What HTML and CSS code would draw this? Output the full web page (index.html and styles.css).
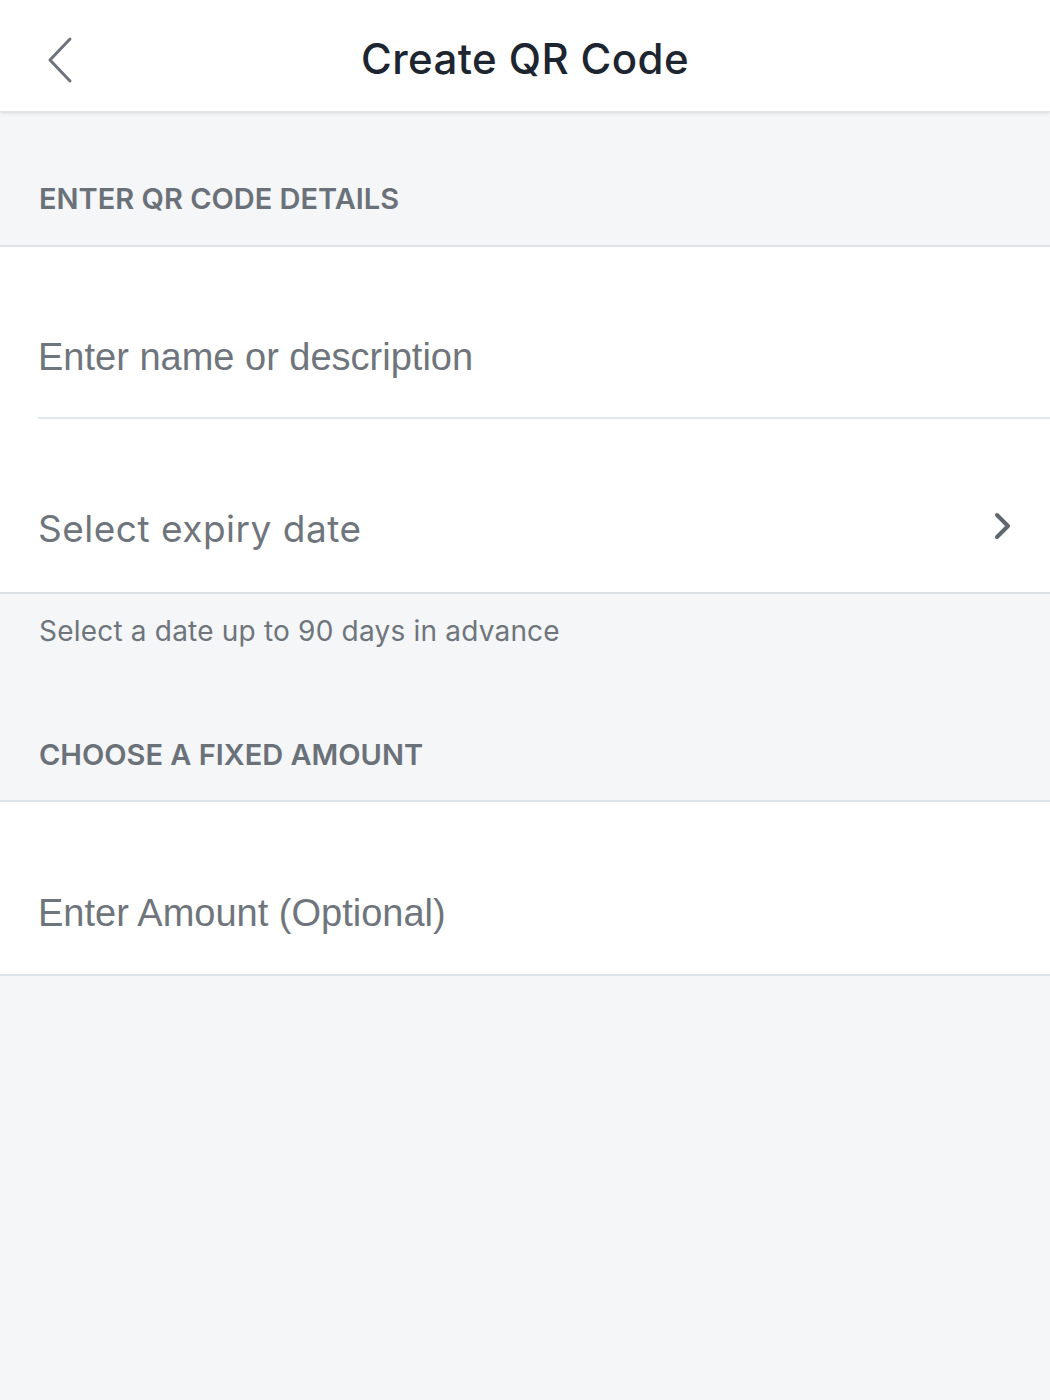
FILE: index.html
```html
<!DOCTYPE html>
<html>
  <head>
    <meta charset="utf-8" />
    <title>Create QR Code</title>
    <link rel="stylesheet" href="styles.css">
  </head>
  <body>
    <div id="app">
      <header class="topbar">
        <button class="back-btn" type="button" aria-label="Back">
          <svg width="28" height="48" viewBox="0 0 28 48">
            <path d="M25 3 L5 24 L25 45" fill="none" stroke="#6d747b" stroke-width="3" stroke-linecap="round" stroke-linejoin="round"/>
          </svg>
        </button>
        <h1 class="title">Create QR Code</h1>
      </header>

      <div class="section-label">ENTER QR CODE DETAILS</div>
      <div class="group">
        <div class="field field-name">
          <span class="placeholder">Enter name or description</span>
        </div>
        <div class="field field-date">
          <span class="select-text">Select expiry date</span>
          <svg class="chevron" width="22" height="30" viewBox="0 0 22 30">
            <path d="M5 4 L16 15 L5 26" fill="none" stroke="#5f666d" stroke-width="4" stroke-linecap="round" stroke-linejoin="round"/>
          </svg>
        </div>
      </div>
      <p class="hint">Select a date up to 90 days in advance</p>

      <div class="section-label section-label-second">CHOOSE A FIXED AMOUNT</div>
      <div class="group">
        <div class="field field-amount">
          <span class="placeholder">Enter Amount (Optional)</span>
        </div>
      </div>
    </div>
  </body>
</html>
```

FILE: styles.css
```css
/* Create QR code form */
body {
  margin: 0;
  padding: 0;
  background-color: #f4f6f8;
  font-family: Inter, "Open Sans", sans-serif;
}
#app {
  width: 1050px;
  min-height: 1400px;
  background-color: #f4f6f8;
}
.topbar {
  height: 112px;
  padding-top: 6px;
  box-sizing: border-box;
  background-color: #fff;
  display: flex;
  align-items: center;
  justify-content: center;
  position: relative;
  box-shadow: 0 1px 3px rgba(0, 0, 0, 0.12);
  border-bottom: 1px solid #e3e6ea;
  margin-bottom: 1px;
}
.back-btn {
  position: absolute;
  left: 45px;
  top: 36px;
  padding: 0;
  border: none;
  background: none;
  cursor: pointer;
}
.title {
  margin: 0;
  font-size: 42px;
  font-weight: 500;
  color: #1d2530;
  letter-spacing: 0.4px;
}
.section-label {
  height: 134px;
  box-sizing: border-box;
  padding: 71px 39px 0;
  font-size: 29px;
  font-weight: 600;
  color: #6b7178;
  letter-spacing: 0;
  line-height: 1;
  border-bottom: 2px solid #dde2e6;
}
.section-label-second {
  height: 156px;
  padding-top: 92px;
}
.group {
  background-color: #fff;
  border-bottom: 2px solid #dde2e6;
}
.field {
  height: 172px;
  margin-left: 38px;
  display: flex;
  align-items: center;
  justify-content: space-between;
  padding: 50px 36px 0 0;
  box-sizing: border-box;
}
.field-name {
  border-bottom: 2px solid #e1e6ea;
}
.field-date {
  height: 173px;
  padding-top: 46px;
}
.placeholder {
  font-family: "Liberation Sans", Arial, sans-serif;
  font-size: 38px;
  color: #6f757c;
}
.select-text {
  font-size: 37px;
  color: #6f757c;
  letter-spacing: 0.5px;
}
.chevron {
  margin-top: -6px;
}
.hint {
  margin: 0;
  padding: 20px 39px 0;
  font-size: 28px;
  color: #6f757c;
  letter-spacing: 0.2px;
  line-height: 34px;
}
.hint + .section-label-second {
  height: 154px;
}
```
